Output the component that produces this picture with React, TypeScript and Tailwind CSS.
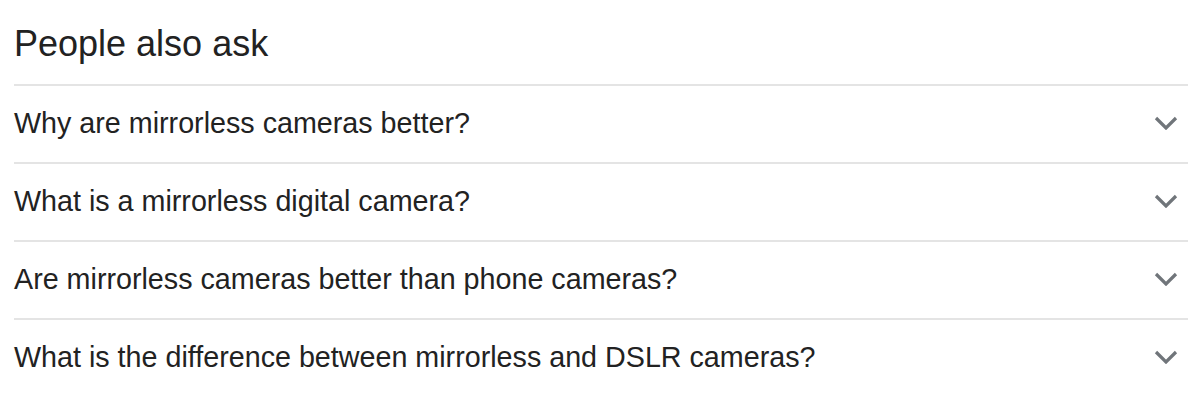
const questions = [
  "Why are mirrorless cameras better?",
  "What is a mirrorless digital camera?",
  "Are mirrorless cameras better than phone cameras?",
  "What is the difference between mirrorless and DSLR cameras?",
];

const Chevron = () => (
  <svg width="24" height="14" viewBox="0 0 24 14" fill="none" className="shrink-0">
    <path
      d="M2 2l10 10L22 2"
      stroke="#70757a"
      strokeWidth="3.2"
      strokeLinecap="butt"
      strokeLinejoin="miter"
    />
  </svg>
);

const App = () => {
  return (
    <div className="w-[1194px] h-[408px] bg-white font-['Liberation_Sans',Arial,sans-serif] text-[#222]">
      <div className="pl-[14px] pr-[6px]">
        <h2 className="pt-[24px] pb-[20px] text-[36px] leading-[40px] font-normal">
          People also ask
        </h2>

        {questions.map((q) => (
          <div
            key={q}
            className="h-[78px] border-t-2 border-[#e4e4e4] flex items-center justify-between cursor-pointer"
          >
            <span className="text-[28.7px]">{q}</span>
            <div className="pr-[10px] pb-[2px]">
              <Chevron />
            </div>
          </div>
        ))}
      </div>
    </div>
  );
};

export default App;
